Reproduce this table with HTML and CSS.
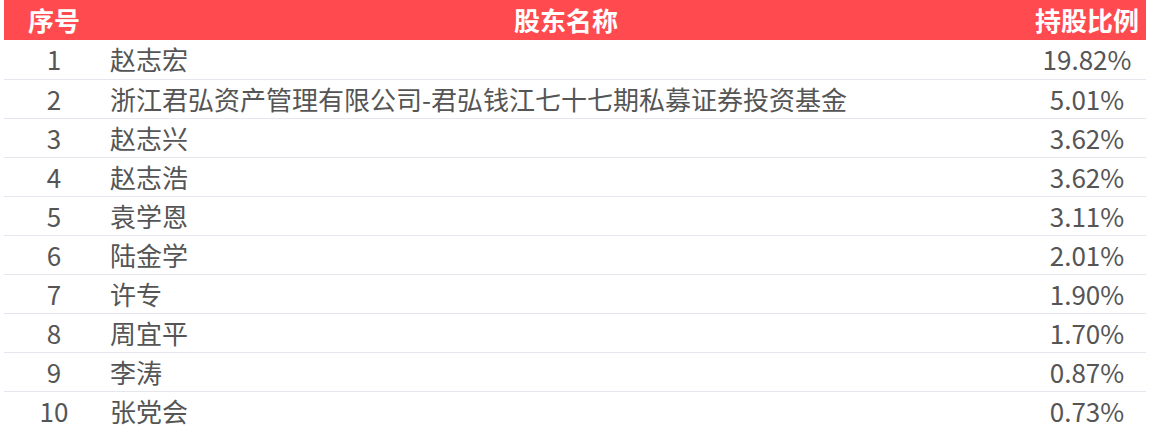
FILE: index.html
```html
<!DOCTYPE html>
<html lang="zh-CN">
<head>
<meta charset="utf-8">
<title>十大股东</title>
<link rel="stylesheet" href="styles.css">
</head>
<body>
<div class="table">
  <div class="row head">
    <div class="c-no">序号</div>
    <div class="c-name">股东名称</div>
    <div class="c-pct">持股比例</div>
  </div>
  <div class="row"><div class="c-no">1</div><div class="c-name">赵志宏</div><div class="c-pct">19.82%</div></div>
  <div class="row"><div class="c-no">2</div><div class="c-name">浙江君弘资产管理有限公司-君弘钱江七十七期私募证券投资基金</div><div class="c-pct">5.01%</div></div>
  <div class="row"><div class="c-no">3</div><div class="c-name">赵志兴</div><div class="c-pct">3.62%</div></div>
  <div class="row"><div class="c-no">4</div><div class="c-name">赵志浩</div><div class="c-pct">3.62%</div></div>
  <div class="row"><div class="c-no">5</div><div class="c-name">袁学恩</div><div class="c-pct">3.11%</div></div>
  <div class="row"><div class="c-no">6</div><div class="c-name">陆金学</div><div class="c-pct">2.01%</div></div>
  <div class="row"><div class="c-no">7</div><div class="c-name">许专</div><div class="c-pct">1.90%</div></div>
  <div class="row"><div class="c-no">8</div><div class="c-name">周宜平</div><div class="c-pct">1.70%</div></div>
  <div class="row"><div class="c-no">9</div><div class="c-name">李涛</div><div class="c-pct">0.87%</div></div>
  <div class="row"><div class="c-no">10</div><div class="c-name">张党会</div><div class="c-pct">0.73%</div></div>
</div>
</body>
</html>
```

FILE: styles.css
```css
html, body {
  margin: 0;
  padding: 0;
  background: #ffffff;
}
body {
  font-family: "Noto Sans CJK SC", "Noto Sans", sans-serif;
  font-size: 26px;
  color: #555555;
}
.table {
  padding: 0 4px;
}
.row {
  display: grid;
  grid-template-columns: 100px 1fr 118px;
  height: 38px;
  line-height: 38px;
  border-top: 1px solid #e6e6ee;
  white-space: nowrap;
}
.row.head {
  height: 40px;
  line-height: 40px;
  border-top: none;
  background: #ff4b4f;
  color: #ffffff;
  font-weight: 700;
}
.head + .row {
  border-top: none;
  height: 39px;
}
.c-no {
  text-align: center;
}
.c-name {
  padding-left: 6px;
}
.head .c-name {
  padding-left: 0;
  text-align: center;
}
.c-pct {
  text-align: center;
}
```
